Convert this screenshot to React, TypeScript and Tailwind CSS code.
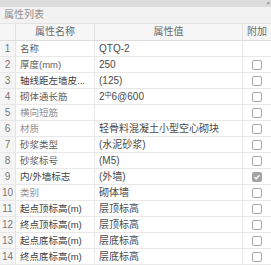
const rows: { name: string; value: React.ReactNode; tone: 'dark' | 'mid' | 'light'; check: 'none' | 'off' | 'on' }[] = [
  { name: '名称', value: 'QTQ-2', tone: 'mid', check: 'none' },
  { name: '厚度(mm)', value: '250', tone: 'mid', check: 'off' },
  { name: '轴线距左墙皮...', value: '(125)', tone: 'dark', check: 'off' },
  {
    name: '砌体通长筋',
    value: (
      <>
        2<span className="relative -top-[2px] text-[7px]">中</span>6@600
      </>
    ),
    tone: 'mid',
    check: 'off',
  },
  { name: '横向短筋', value: '', tone: 'light', check: 'off' },
  { name: '材质', value: '轻骨料混凝土小型空心砌块', tone: 'light', check: 'off' },
  { name: '砂浆类型', value: '(水泥砂浆)', tone: 'mid', check: 'off' },
  { name: '砂浆标号', value: '(M5)', tone: 'mid', check: 'off' },
  { name: '内/外墙标志', value: '(外墙)', tone: 'dark', check: 'on' },
  { name: '类别', value: '砌体墙', tone: 'light', check: 'off' },
  { name: '起点顶标高(m)', value: '层顶标高', tone: 'dark', check: 'off' },
  { name: '终点顶标高(m)', value: '层顶标高', tone: 'dark', check: 'off' },
  { name: '起点底标高(m)', value: '层底标高', tone: 'dark', check: 'off' },
  { name: '终点底标高(m)', value: '层底标高', tone: 'dark', check: 'off' },
]

const toneClass = {
  dark: 'text-[#3e3e3e]',
  mid: 'text-[#5e5e5e]',
  light: 'text-[#929292]',
}

function Checkbox({ checked }: { checked: boolean }) {
  if (checked) {
    return (
      <div className="flex h-[10px] w-[10px] items-center justify-center rounded-[2px] bg-[#a4a4a4]">
        <svg width="8" height="8" viewBox="0 0 8 8">
          <path d="M1.5 4.2 L3.2 5.8 L6.5 2.2" fill="none" stroke="#ffffff" strokeWidth="1.3" />
        </svg>
      </div>
    )
  }
  return <div className="h-[10px] w-[10px] rounded-[2px] border border-[#a8a8a8] bg-white" />
}

export default function App() {
  return (
    <div
      className="h-[265px] w-[271px] overflow-hidden bg-white text-[10px] leading-none"
      style={{ fontFamily: '"Liberation Sans", "Noto Sans CJK SC", sans-serif' }}
    >
      {/* window strip */}
      <div className="flex h-[7px] items-start justify-end bg-[#dcdcdc] pr-[1px]">
        <span className="text-[6px] leading-[6px] text-[#777]">×</span>
      </div>

      {/* panel title */}
      <div className="flex h-[17px] items-center border-b border-[#e4e4e4] bg-[#f2f2f2] pl-[4px] text-[#8e8e8e]">
        属性列表
      </div>

      {/* header */}
      <div className="grid h-[17px] grid-cols-[16px_79px_148px_28px] border-b border-[#dddddd] bg-[#f6f6f6] text-[#6a6a6a]">
        <div className="border-r border-[#e2e2e2]" />
        <div className="flex items-center justify-center border-r border-[#e2e2e2]">属性名称</div>
        <div className="flex items-center justify-center border-r border-[#e2e2e2]">属性值</div>
        <div className="flex items-center justify-center">附加</div>
      </div>

      {rows.map((r, i) => (
        <div
          key={i}
          className="grid h-[16px] grid-cols-[16px_79px_148px_28px] border-b border-[#e8e8e8]"
        >
          <div className="flex items-center justify-center border-r border-[#e4e4e4] bg-[#f5f5f5] text-[#7a7a7a]">
            {i + 1}
          </div>
          <div
            className={`overflow-hidden whitespace-nowrap border-r border-[#e8e8e8] pl-[4px] text-[9.5px] leading-[15px] ${toneClass[r.tone]}`}
          >
            {r.name}
          </div>
          <div className="flex items-center border-r border-[#e8e8e8] pl-[4px] text-[#4a4a4a]">{r.value}</div>
          <div className="flex items-center justify-center">
            {r.check !== 'none' && <Checkbox checked={r.check === 'on'} />}
          </div>
        </div>
      ))}
    </div>
  )
}
